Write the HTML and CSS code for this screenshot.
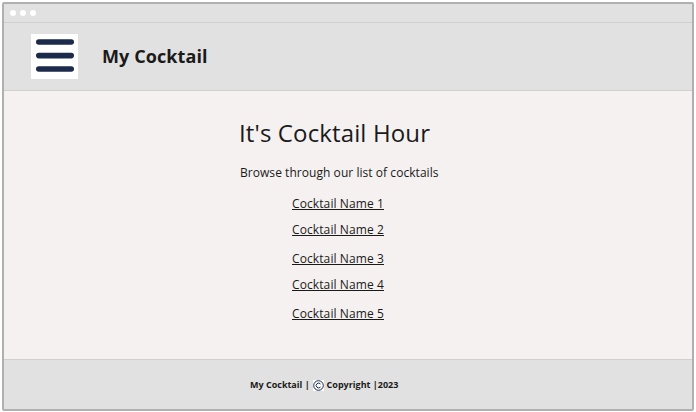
FILE: index.html
```html
<!DOCTYPE html>
<html lang="en">
<head>
<meta charset="utf-8">
<title>My Cocktail</title>
<link rel="stylesheet" href="styles.css">
</head>
<body>
<div class="window">
  <div class="titlebar"><span class="dot"></span><span class="dot"></span><span class="dot"></span></div>
  <header class="header">
    <svg class="menu" viewBox="0 0 47 45" width="47" height="45">
      <rect width="47" height="45" fill="#fff"/>
      <g fill="#1c2b4b"><rect x="5" y="5.2" width="38" height="5.6" rx="2.8"/><rect x="5" y="18.8" width="38" height="5.6" rx="2.8"/><rect x="5" y="32.2" width="38" height="5.6" rx="2.8"/></g>
    </svg>
    <span class="brand">My Cocktail</span>
  </header>
  <main class="main">
    <h1 class="title">It's Cocktail Hour</h1>
    <p class="intro">Browse through our list of cocktails</p>
    <ul class="list">
      <li><a>Cocktail Name 1</a></li>
      <li><a>Cocktail Name 2</a></li>
      <li><a>Cocktail Name 3</a></li>
      <li><a>Cocktail Name 4</a></li>
      <li><a>Cocktail Name 5</a></li>
    </ul>
  </main>
  <footer class="footer">
    <span>My Cocktail |</span>
    <svg class="copy" viewBox="0 0 11 11" width="11" height="11">
      <rect width="11" height="11" fill="#fff"/>
      <circle cx="5.5" cy="5.5" r="4.8" fill="none" stroke="#1c2b4b"/>
      <path d="M7.5 4A2.4 2.4 0 1 0 7.5 7" fill="none" stroke="#1c2b4b"/>
    </svg>
    <span>Copyright |2023</span>
  </footer>
</div>
</body>
</html>
```

FILE: styles.css
```css
* { box-sizing: border-box; }
body {
  margin: 0;
  height: 412px;
  padding: 2px 2px 1px;
  overflow: hidden;
  background: #fff;
  color: #1a1a1a;
  font-family: "Open Sans", sans-serif;
}
.window {
  display: flex;
  flex-direction: column;
  width: 692px;
  height: 409px;
  border: 2px solid #b0b0b0;
  border-radius: 2px;
  background: #f5f1f0;
}
.titlebar {
  display: flex;
  gap: 4px;
  height: 19px;
  padding: 6px 0 0 6px;
  border-bottom: 1px solid #cfcfcf;
  background: #e1e1e1;
}
.dot { width: 6px; height: 6px; border-radius: 50%; background: #fff; }
.header {
  display: flex;
  height: 68px;
  padding: 11px 0 0 27px;
  border-bottom: 1px solid #d0d0d0;
  background: #e1e1e1;
}
.brand { margin: 10px 0 0 24px; font-size: 18px; line-height: 24px; font-weight: 700; letter-spacing: .1px; }
.main { flex: 1; }
.title { margin: 25px 0 0 235px; font-size: 24px; line-height: 34px; font-weight: 400; letter-spacing: .13px; }
.intro { margin: 14px 0 0 236px; font-size: 12px; line-height: 18px; letter-spacing: .05px; }
.list {
  display: grid;
  grid-template-rows: 26px 29px 26px 29px 26px;
  margin: 13px 0 0 288px;
  padding: 0;
  list-style: none;
  font-size: 12px;
  line-height: 18px;
  letter-spacing: .1px;
}
.list a { text-decoration: underline; text-underline-offset: 1px; text-decoration-skip-ink: none; }
.footer {
  display: flex;
  height: 50px;
  padding: 18px 0 0 246px;
  border-top: 1px solid #cfcfcf;
  background: #e1e1e1;
  font-size: 9px;
  line-height: 14px;
  font-weight: 700;
}
.copy { margin: 2px 3px 0 3px; }
```
